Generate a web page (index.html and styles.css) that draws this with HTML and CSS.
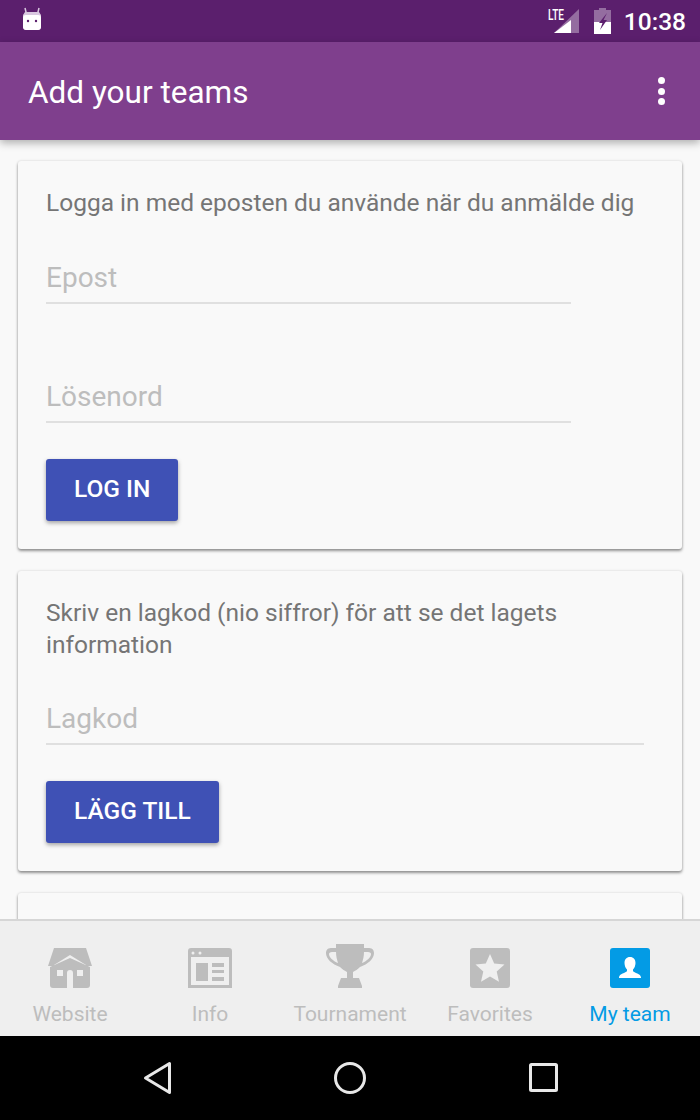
FILE: index.html
```html
<!DOCTYPE html>
<html lang="en">
<head>
    <meta charset="UTF-8">
    <title>Add your teams</title>
    <link rel="stylesheet" href="styles.css">
</head>
<body>
    <div class="phone">
        <div class="status-bar">
            <svg class="status-app" width="24" height="26" viewBox="0 0 24 26">
                <path d="M5 2l1.5 6M19 2l-1.5 6" stroke="#d9c8e0" stroke-width="1.5" fill="none"/>
                <path d="M5 6h14l2 3v12a4 4 0 0 1-3 3H6a4 4 0 0 1-3-3V9z" fill="#d9c8e0"/>
                <path d="M3 12c0-2 1-3 3-3h12c2 0 3 1 3 3v9c0 2-1 3-3 3H6c-2 0-3-1-3-3z" fill="#fff"/>
                <circle cx="8" cy="15" r="1.2" fill="#5b1f6d"/>
                <circle cx="16" cy="15" r="1.2" fill="#5b1f6d"/>
            </svg>
            <div class="status-right">
                <svg width="32" height="28" viewBox="0 0 32 28">
                    <path d="M31 2v24H6z" fill="#fff" opacity="0.35"/>
                    <path d="M23 13v13H6z" fill="#fff"/>
                    <text x="0" y="13" class="lte" textLength="16" lengthAdjust="spacingAndGlyphs">LTE</text>
                </svg>
                <svg class="battery" width="18" height="26" viewBox="0 0 18 26">
                    <path d="M5 0h7v2h5v24H0V2h5z" fill="#fff" opacity="0.35"/>
                    <path d="M0 14h17v12H0z" fill="#fff"/>
                    <path d="M13 5L5 15h3.500L6 22l7-10H9.500z" fill="#5b1f6d"/>
                </svg>
                <span class="clock">10:38</span>
            </div>
        </div>

        <header class="app-bar">
            <h1>Add your teams</h1>
            <div class="overflow-menu"><i></i><i></i><i></i></div>
        </header>

        <main class="content">
            <section class="card card-login">
                <p>Logga in med eposten du använde när du anmälde dig</p>
                <div class="field short">Epost</div>
                <div class="field short second">Lösenord</div>
                <button class="btn">LOG IN</button>
            </section>

            <section class="card card-code">
                <p>Skriv en lagkod (nio siffror) för att se det lagets information</p>
                <div class="field">Lagkod</div>
                <button class="btn">LÄGG TILL</button>
            </section>

            <section class="card card-empty"></section>
        </main>

        <nav class="tabs">
            <div class="tab">
                <svg width="44" height="40" viewBox="0 0 44 40">
                    <path d="M6 0h32l6 18H38v-1L22 7 6 17v1H0z" fill="#bdbdbd"/>
                    <path fill-rule="evenodd" d="M2 19L22 10l20 9v18a3 3 0 0 1-3 3H5a3 3 0 0 1-3-3zM9 22v6h6v-6zM29 22v6h6v-6zM19 25v15h6V25a3 3 0 0 0-6 0z" fill="#bdbdbd"/>
                </svg>
                <span>Website</span>
            </div>
            <div class="tab">
                <svg width="44" height="40" viewBox="0 0 44 40">
                    <path fill-rule="evenodd" d="M3 0h38a3 3 0 0 1 3 3v37H0V3a3 3 0 0 1 3-3zM3 9v28h38V9z" fill="#bdbdbd"/>
                    <circle cx="5" cy="5" r="1.5" fill="#efefef"/>
                    <circle cx="12" cy="5" r="1.5" fill="#efefef"/>
                    <path d="M8 15h12v18H8zM24 15h12v4H24zM24 22h12v3H24zM24 29h12v4H24z" fill="#bdbdbd"/>
                </svg>
                <span>Info</span>
            </div>
            <div class="tab">
                <svg width="48" height="44" viewBox="0 0 48 44">
                    <path fill-rule="evenodd" d="M10 0h28v4h5c4 0 5 3 5 5 0 6-6 11-14 14-2 2-5 4-7 5v6h6l3 8v2H12v-2l3-8h6v-6c-2-1-5-3-7-5C6 20 0 15 0 9c0-2 1-5 5-5h5zM10 8H6c-2 0-3 1-3 2 0 3 4 7 9 9-1-3-2-7-2-11zM38 8c0 4-1 8-2 11 5-2 9-6 9-9 0-1-1-2-3-2z" fill="#bdbdbd"/>
                </svg>
                <span>Tournament</span>
            </div>
            <div class="tab">
                <svg width="40" height="40" viewBox="0 0 40 40">
                    <rect width="40" height="40" rx="3" fill="#bdbdbd"/>
                    <path d="M20 6l4.200 9.600 10.300 1-7.800 6.900 2.300 10.200L20 28.400l-9 5.300 2.300-10.200-7.800-6.900 10.300-1z" fill="#efefef"/>
                </svg>
                <span>Favorites</span>
            </div>
            <div class="tab active">
                <svg width="40" height="40" viewBox="0 0 40 40">
                    <rect width="40" height="40" rx="3" fill="#039be5"/>
                    <path d="M20 9c3.500 0 5.500 2.500 5.500 6 0 2.500-1 5-2.500 6.500V23c1 2 8 2.500 8 6.500V30H9v-.5c0-4 7-4.500 8-6.500v-1.500C15.500 20 14.500 17.500 14.500 15c0-3.500 2-6 5.500-6z" fill="#fff"/>
                </svg>
                <span>My team</span>
            </div>
        </nav>

        <div class="nav-bar">
            <svg width="30" height="34" viewBox="0 0 30 34">
                <path d="M28.500 2.500v29L4.500 17z" fill="none" stroke="#e8e8e8" stroke-width="3" stroke-linejoin="round"/>
            </svg>
            <svg width="34" height="34" viewBox="0 0 34 34">
                <circle cx="17" cy="17" r="14.500" fill="none" stroke="#e8e8e8" stroke-width="3"/>
            </svg>
            <svg width="30" height="30" viewBox="0 0 30 30">
                <rect x="1.500" y="1.500" width="26" height="26" rx="1" fill="none" stroke="#e8e8e8" stroke-width="3"/>
            </svg>
        </div>
    </div>
</body>
</html>
```

FILE: styles.css
```css
* {
    margin: 0;
    padding: 0;
    box-sizing: border-box;
    font-family: Roboto, "Liberation Sans", sans-serif;
}

body {
    background: #f9f9f9;
}

.phone {
    width: 700px;
    height: 1120px;
    display: flex;
    flex-direction: column;
    overflow: hidden;
}

.status-bar {
    height: 42px;
    flex-shrink: 0;
    background: #5b1f6d;
    display: flex;
    align-items: center;
    justify-content: space-between;
    padding: 0 14px 0 20px;
    color: #fff;
}

.status-app {
    margin-top: -4px;
}

.status-right {
    display: flex;
    align-items: center;
}

.lte {
    font-size: 15px;
    font-weight: 500;
    fill: #fff;
}

.battery {
    margin-left: 14px;
}

.clock {
    margin-left: 12px;
    font-size: 24.5px;
    font-weight: 500;
}

.app-bar {
    height: 98px;
    flex-shrink: 0;
    background: #7f3f8d;
    display: flex;
    align-items: center;
    justify-content: space-between;
    padding: 0 35px 0 28px;
    color: #fff;
    box-shadow: 0 3px 8px rgba(0, 0, 0, 0.3);
    position: relative;
    z-index: 1;
}

.app-bar h1 {
    margin-top: 2px;
    font-size: 31.5px;
    font-weight: 400;
}

.overflow-menu {
    display: flex;
    flex-direction: column;
    gap: 3.5px;
}

.overflow-menu i {
    width: 7px;
    height: 7px;
    border-radius: 50%;
    background: #fff;
}

.content {
    flex: 1;
    min-height: 0;
    overflow: hidden;
    padding: 21px 18px 0;
    display: flex;
    flex-direction: column;
    gap: 22px;
}

.card {
    flex-shrink: 0;
    background: #f9f9f9;
    border-radius: 3px;
    padding: 26px 38px 28px 28px;
    box-shadow: 0 2px 3px rgba(0, 0, 0, 0.4), 0 0 3px rgba(0, 0, 0, 0.12);
}

.card p {
    font-size: 24.5px;
    line-height: 32px;
    color: #757575;
}

.card-empty {
    height: 60px;
}

.field {
    height: 42px;
    margin-top: 42px;
    border-bottom: 2px solid #e0e0e0;
    font-size: 28px;
    line-height: 32px;
    color: #bdbdbd;
}

.field.short {
    width: 525px;
    margin-top: 43px;
}

.field.second {
    margin-top: 77px;
}

.btn {
    display: block;
    height: 62px;
    margin-top: 36px;
    padding: 0 28px 4px;
    border: none;
    border-radius: 3px;
    background: #3f51b5;
    color: #fff;
    font-size: 24.5px;
    font-weight: 500;
    box-shadow: 0 2px 4px rgba(0, 0, 0, 0.35);
}

.tabs {
    height: 117px;
    flex-shrink: 0;
    background: #efefef;
    border-top: 2px solid #d6d6d6;
    display: flex;
    position: relative;
    z-index: 1;
}

.tab {
    flex: 1;
    display: flex;
    flex-direction: column;
    align-items: center;
    justify-content: flex-end;
    padding-bottom: 8px;
    color: #bdbdbd;
    font-size: 21px;
}

.tab svg {
    margin-bottom: 12px;
}

.tab span {
    line-height: 28px;
}

.tab.active {
    color: #039be5;
}

.nav-bar {
    height: 84px;
    flex-shrink: 0;
    background: #000;
    display: flex;
    align-items: center;
    justify-content: center;
    gap: 162px;
}
```
